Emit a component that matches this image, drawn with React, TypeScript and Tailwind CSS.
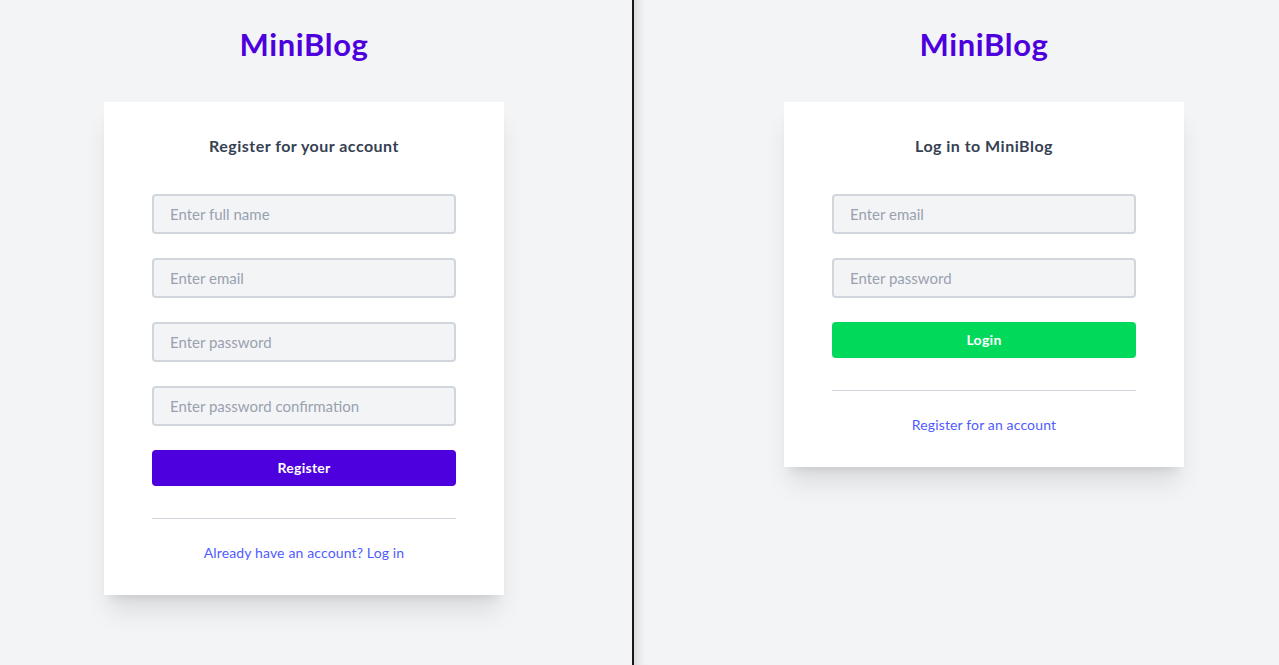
const font = { fontFamily: 'Lato, "Open Sans", sans-serif' };

function Field({ placeholder, type = 'text' }: { placeholder: string; type?: string }) {
  return (
    <input
      type={type}
      placeholder={placeholder}
      className="w-full h-10 px-4 bg-gray-100 border-2 border-gray-300 rounded text-[15px] text-gray-700 placeholder:text-gray-400 outline-none"
    />
  );
}

function Card({ title, children }: { title: string; children: React.ReactNode }) {
  return (
    <div className="w-[400px] bg-white shadow-xl px-12 pt-8 pb-8">
      <h2 className="text-center text-base font-bold text-gray-700 leading-6 tracking-[0.03em]">{title}</h2>
      {children}
    </div>
  );
}

function Logo() {
  return (
    <h1 className="text-[31px] font-bold text-[#4d00dd] leading-9 tracking-[0.02em] pt-[26px] pb-[40px]">
      MiniBlog
    </h1>
  );
}

export default function App() {
  return (
    <div style={font} className="flex w-full h-[665px] bg-gray-100 overflow-hidden">
      {/* register pane */}
      <div className="w-[632px] shrink-0">
        <div className="w-[608px] flex flex-col items-center">
          <Logo />
          <Card title="Register for your account">
            <div className="mt-[36px] flex flex-col gap-6">
              <Field placeholder="Enter full name" />
              <Field placeholder="Enter email" type="email" />
              <Field placeholder="Enter password" type="password" />
              <Field placeholder="Enter password confirmation" type="password" />
              <button className="h-9 w-full rounded bg-[#4d00dd] text-white text-sm font-bold tracking-[0.02em]">Register</button>
            </div>
            <hr className="mt-8 border-gray-300" />
            <p className="mt-6 text-center text-sm text-[#4f5bff] tracking-[0.01em]">Already have an account? Log in</p>
          </Card>
        </div>
      </div>
      <div className="w-[2px] shrink-0 bg-[#1c1420]" />
      {/* login pane */}
      <div className="flex-1 shadow-[inset_12px_0_10px_-8px_rgba(0,0,0,0.12)]">
        <div className="pl-[150px] w-[700px] flex flex-col">
          <div className="w-[400px] flex flex-col items-center">
            <Logo />
            <Card title="Log in to MiniBlog">
              <div className="mt-[36px] flex flex-col gap-6">
                <Field placeholder="Enter email" type="email" />
                <Field placeholder="Enter password" type="password" />
                <button className="h-9 w-full rounded bg-[#00d95a] text-white text-sm font-bold tracking-[0.02em]">Login</button>
              </div>
              <hr className="mt-8 border-gray-300" />
              <p className="mt-6 text-center text-sm text-[#4f5bff] tracking-[0.01em]">Register for an account</p>
            </Card>
          </div>
        </div>
      </div>
    </div>
  );
}
